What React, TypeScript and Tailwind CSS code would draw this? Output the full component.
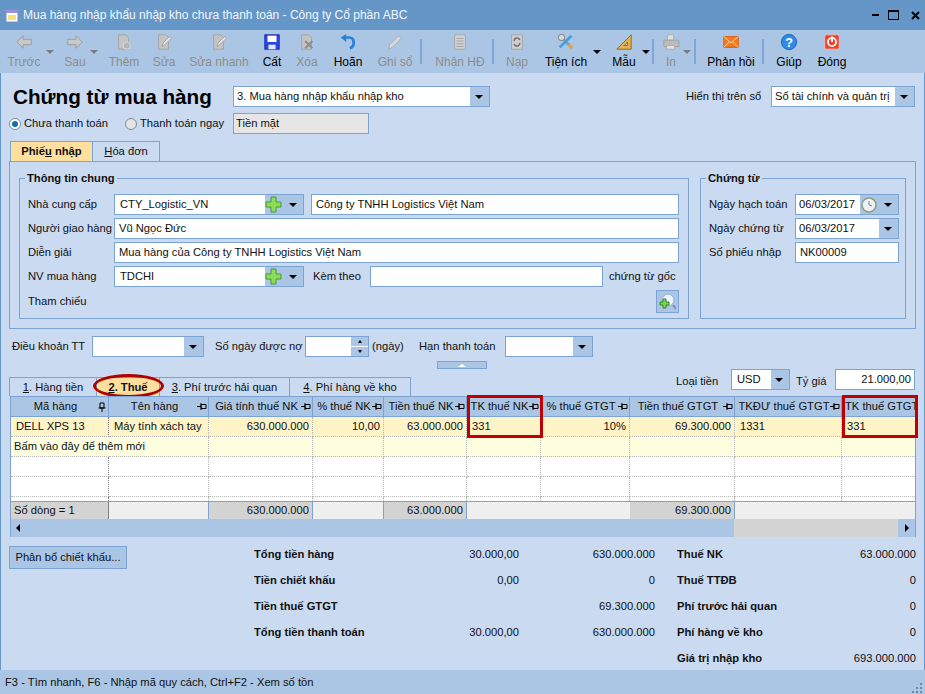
import React from 'react';

// Tam giác nhỏ của combo và toolbar
const Caret: React.FC<{ gray?: boolean }> = ({ gray }) => (
  <span className={`block h-0 w-0 border-x-[4px] border-t-[4px] border-x-transparent ${gray ? 'border-t-[#7d7d7d]' : 'border-t-black'}`} />
);

const Svg: React.FC<{ children: React.ReactNode }> = ({ children }) => (
  <svg width="18" height="18" viewBox="0 0 20 20" className="block">{children}</svg>
);

const DocBase = () => <path d="M4 2h8l3 3v13H4z" fill="#c4c4c4" stroke="#a3a3a3" />;

const icons: Record<string, React.ReactNode> = {
  back: <Svg><path d="M9 3 2 10l7 7v-4h9V7H9z" fill="#c9c9c9" stroke="#9a9a9a" /></Svg>,
  next: <Svg><path d="M11 3l7 7-7 7v-4H2V7h9z" fill="#c9c9c9" stroke="#9a9a9a" /></Svg>,
  add: <Svg><DocBase /><circle cx="13" cy="14" r="4" fill="#b5b5b5" stroke="#dcdcdc" /></Svg>,
  edit: <Svg><DocBase /><path d="M8 15l1-4 7-7 2 2-7 7z" fill="#e2e2e2" stroke="#a3a3a3" /></Svg>,
  save: (
    <Svg>
      <rect x="2" y="2" width="16" height="16" fill="#2b46e0" stroke="#1a2bb0" />
      <rect x="5" y="3" width="10" height="7" fill="#fff" />
      <rect x="6" y="13" width="8" height="5" fill="#dfe6ff" />
    </Svg>
  ),
  del: <Svg><DocBase /><path d="M8 9l8 8M16 9l-8 8" stroke="#8f8f8f" strokeWidth="2.4" /></Svg>,
  undo: (
    <Svg>
      <path d="M6 5h5c7 0 7 10 1 12" fill="none" stroke="#2a7fd6" strokeWidth="3" />
      <path d="M8 1 2 5l6 5z" fill="#2a7fd6" />
    </Svg>
  ),
  pencil: <Svg><path d="M3 18l1-5L14 3l3 3L7 16z" fill="#d8d8d8" stroke="#a8a8a8" /></Svg>,
  invoice: (
    <Svg>
      <path d="M4 2h12v16H4z" fill="#d4d4d4" stroke="#a3a3a3" />
      <path d="M6 6h8M6 9h8M6 12h8M6 15h8" stroke="#9a9a9a" />
    </Svg>
  ),
  reload: (
    <Svg>
      <path d="M4 2h12v16H4z" fill="#cfcfcf" stroke="#a3a3a3" />
      <path d="M7 9a3 3 0 0 1 6-1M13 11a3 3 0 0 1-6 1" fill="none" stroke="#6e6e6e" strokeWidth="1.6" />
    </Svg>
  ),
  tools: (
    <Svg>
      <path d="M4 4l13 13" stroke="#8a9db0" strokeWidth="3" />
      <path d="M16 3 3 16" stroke="#3ea0e6" strokeWidth="3" />
      <circle cx="5" cy="5" r="3.5" fill="#d8d8d8" stroke="#777" />
      <path d="M13 13l4 4" stroke="#e8a33a" strokeWidth="3" />
    </Svg>
  ),
  ruler: (
    <Svg>
      <path d="M18 2v16H2z" fill="#e8b04a" stroke="#8a6a20" />
      <path d="M14 10v4h-4z" fill="#c9daf1" stroke="#8a6a20" />
    </Svg>
  ),
  print: (
    <Svg>
      <path d="M6 2h7v6H6z" fill="#dedede" stroke="#aaa" />
      <path d="M2 8h15a2 2 0 0 1 2 2v5H2z" fill="#bcbcbc" stroke="#a0a0a0" />
      <path d="M5 14h9v4H5z" fill="#e4e4e4" stroke="#aaa" />
    </Svg>
  ),
  mail: (
    <Svg>
      <rect x="2" y="4" width="16" height="12" fill="#f47a20" stroke="#d85f10" />
      <path d="M2 4l8 7 8-7M2 16l6-6M18 16l-6-6" fill="none" stroke="#ffe0c0" />
    </Svg>
  ),
  help: (
    <Svg>
      <circle cx="10" cy="10" r="8.5" fill="#2f8be6" stroke="#1c64b8" />
      <text x="10" y="15" textAnchor="middle" fontSize="14" fontWeight="700" fill="#fff" fontFamily="Liberation Sans, sans-serif">?</text>
    </Svg>
  ),
  close: (
    <Svg>
      <rect x="2" y="2" width="16" height="16" rx="2" fill="#e8442e" stroke="#f6c0b4" />
      <circle cx="10" cy="10" r="4.5" fill="none" stroke="#fff" strokeWidth="2" />
      <path d="M10 4v6" stroke="#fff" strokeWidth="2" />
    </Svg>
  ),
};

const toolbar = [
  { label: 'Trước', icon: 'back', box: 'ml-[4px] w-[40px]', off: true, caret: 'ml-[2px]' },
  { label: 'Sau', icon: 'next', box: 'ml-[6px] w-[30px]', off: true, caret: 'ml-0' },
  { label: 'Thêm', icon: 'add', box: 'ml-[6px] w-[40px]', off: true },
  { label: 'Sửa', icon: 'edit', box: 'ml-[5px] w-[30px]', off: true },
  { label: 'Sửa nhanh', icon: 'edit', box: 'ml-[10px] w-[60px]', off: true },
  { label: 'Cất', icon: 'save', box: 'ml-[8px] w-[30px]' },
  { label: 'Xóa', icon: 'del', box: 'ml-[5px] w-[30px]', off: true },
  { label: 'Hoãn', icon: 'undo', box: 'ml-[6px] w-[40px]' },
  { label: 'Ghi sổ', icon: 'pencil', box: 'ml-[7px] w-[40px]', off: true, sep: 'ml-[5px]' },
  { label: 'Nhận HĐ', icon: 'invoice', box: 'ml-[8px] w-[60px]', off: true, sep: 'ml-[2px]' },
  { label: 'Nạp', icon: 'reload', box: 'ml-[8px] w-[30px]', off: true },
  { label: 'Tiện ích', icon: 'tools', box: 'ml-[9px] w-[50px]', caret: 'ml-[2px]' },
  { label: 'Mẫu', icon: 'ruler', box: 'ml-[8px] w-[30px]', caret: 'ml-[3px]', sep: 'ml-[2px]' },
  { label: 'In', icon: 'print', box: 'ml-[7px] w-[20px]', off: true, caret: 'ml-[2px]', sep: 'ml-[3px]' },
  { label: 'Phản hồi', icon: 'mail', box: 'ml-[5px] w-[60px]', sep: 'ml-[1px]' },
  { label: 'Giúp', icon: 'help', box: 'ml-[10px] w-[30px]' },
  { label: 'Đóng', icon: 'close', box: 'ml-[13px] w-[30px]' },
];

const Toolbar = () => (
  <div className="flex h-[43px] items-start bg-[#abc6e4]">
    {toolbar.map((t) => (
      <React.Fragment key={t.label}>
        <div className={`flex shrink-0 flex-col items-center pt-[3px] ${t.box}`}>
          {icons[t.icon]}
          <span className={`mt-[4px] text-[12px] whitespace-nowrap leading-[15px] ${t.off ? 'text-[#8d8d8d]' : 'text-black'}`}>{t.label}</span>
        </div>
        {t.caret && (
          <div className={`w-[8px] shrink-0 pt-[20px] ${t.caret}`}>
            <Caret gray={t.off} />
          </div>
        )}
        {t.sep && <div className={`mt-[9px] h-[25px] w-[2px] shrink-0 bg-[#7ea6d8] ${t.sep}`} />}
      </React.Fragment>
    ))}
  </div>
);

const Input: React.FC<{ className?: string; children?: React.ReactNode }> = ({ className, children }) => (
  <div className={`flex h-[21px] shrink-0 items-center border border-[#7ba3d4] bg-white whitespace-nowrap ${className ?? 'px-[4px]'}`}>{children}</div>
);

const Plus = () => (
  <svg width="17" height="17" viewBox="0 0 17 17" className="block">
    <path d="M6 1h5v5h5v5h-5v5H6v-5H1V6h5z" fill="#8fdc5a" stroke="#3f9e2c" />
  </svg>
);

const Clock = () => (
  <svg width="16" height="16" viewBox="0 0 16 16" className="block">
    <circle cx="8" cy="8" r="7" fill="#eef2f2" stroke="#8f9a86" strokeWidth="1.5" />
    <path d="M8 4v4l3 1" fill="none" stroke="#6a8aa8" />
  </svg>
);

// Combo: ô trắng + phần nút xanh bên phải
const Combo: React.FC<{ className?: string; btn: string; text?: string; extra?: React.ReactNode; pad?: string }> = ({ className, btn, text, extra, pad }) => (
  <div className={`flex h-[21px] shrink-0 border border-[#7ba3d4] bg-white ${className ?? ''}`}>
    <div className={`flex flex-1 items-center overflow-hidden whitespace-nowrap ${pad ?? 'px-[3px]'}`}>{text}</div>
    <div className={`flex shrink-0 items-center justify-end gap-[7px] bg-[#abc6e4] pr-[6px] ${btn}`}>
      {extra}
      <Caret />
    </div>
  </div>
);

const Label: React.FC<{ className?: string; children: React.ReactNode }> = ({ className, children }) => (
  <span className={`shrink-0 whitespace-nowrap ${className ?? ''}`}>{children}</span>
);

const Group: React.FC<{ title: string; className: string; children: React.ReactNode }> = ({ title, className, children }) => (
  <div className={`relative h-[141px] shrink-0 border border-[#7ba3d4] pt-[15px] ${className}`}>
    <span className="absolute top-[-9px] left-[5px] bg-[#c9daf1] px-[2px] leading-[16px] font-bold">{title}</span>
    {children}
  </div>
);

const Radio: React.FC<{ on?: boolean }> = ({ on }) => (
  <span className={`flex h-[12px] w-[12px] shrink-0 items-center justify-center rounded-full border border-[#7f8a96] ${on ? 'bg-white' : 'bg-[#e4e4e4]'}`}>
    {on && <span className="h-[6px] w-[6px] rounded-full bg-[#0f6fa8]" />}
  </span>
);

const Pin: React.FC<{ down?: boolean }> = ({ down }) => (
  <svg width="10" height="10" viewBox="0 0 10 10" className="block shrink-0">
    {down ? (
      <path d="M3 1h4v5H3zM1.5 6h7M5 6v4" fill="none" stroke="#000" />
    ) : (
      <path d="M4 2.5h5v4H4zM4 1v7M0 4.5h4" fill="none" stroke="#000" />
    )}
  </svg>
);

const cols = 'grid grid-cols-[98px_100px_104px_71px_83px_74px_89px_105px_107px_73px]';

const headers = ['Mã hàng', 'Tên hàng', 'Giá tính thuế NK', '% thuế NK', 'Tiền thuế NK', 'TK thuế NK', '% thuế GTGT', 'Tiền thuế GTGT', 'TKĐƯ thuế GTGT', 'TK thuế GTGT'];
const row1: { t: string; right?: boolean }[] = [
  { t: 'DELL XPS 13' }, { t: 'Máy tính xách tay' }, { t: '630.000.000', right: true }, { t: '10,00', right: true },
  { t: '63.000.000', right: true }, { t: '331' }, { t: '10%', right: true }, { t: '69.300.000', right: true }, { t: '1331' }, { t: '331' },
];
const totals = ['Số dòng = 1', '', '630.000.000', '', '63.000.000', '', '', '69.300.000', '', ''];
const graySum = [true, false, true, false, true, false, false, true, false, false];

const Grid = () => (
  <div className="relative ml-[9px] h-[141px] w-[906px] shrink-0 border border-[#7ba3d4] bg-white">
    {/* Tiêu đề cột */}
    <div className={`${cols} h-[20px] bg-[#abc6e4]`}>
      {headers.map((h, i) => (
        <div key={h} className="flex items-center overflow-hidden border-r border-b border-r-[#7ba3d4] border-b-[#7ba3d4] pr-[1px] pl-[3px] whitespace-nowrap last:border-r-0">
          <span className={`${i === 9 ? '' : 'flex-1 text-center'}`}>{h}</span>
          {i < 9 && <Pin down={i === 0} />}
        </div>
      ))}
    </div>
    <div className={`${cols} h-[20px] bg-[#fff3c8]`}>
      {row1.map((c, i) => (
        <div key={i} className={`flex items-center border-r border-b border-dotted border-[#b5b5b5] pr-[3px] pl-[5px] whitespace-nowrap last:border-r-0 ${c.right ? 'justify-end' : ''} ${i === 0 ? 'border-r-solid border-r-[#808080]' : ''}`}>
          {c.t}
        </div>
      ))}
    </div>
    <div className={`${cols} h-[20px] bg-[#ffffdf]`}>
      {headers.map((h, i) => (
        <div key={h} className={`flex items-center border-r border-b border-dotted border-[#b5b5b5] pl-[3px] whitespace-nowrap last:border-r-0 ${i === 0 ? 'border-r-transparent' : ''}`}>
          {i === 0 ? <span className="relative z-10">Bấm vào đây để thêm mới</span> : null}
        </div>
      ))}
    </div>
    {[0, 1].map((r) => (
      <div key={r} className={`${cols} h-[20px]`}>
        {headers.map((h, i) => (
          <div key={h} className={`border-r border-b border-dotted border-[#b5b5b5] last:border-r-0 ${i === 0 ? 'border-r-solid border-r-[#808080]' : ''}`} />
        ))}
      </div>
    ))}
    <div className={`${cols} h-[4px]`}>
      {headers.map((h, i) => (
        <div key={h} className={`border-r border-dotted border-[#b5b5b5] last:border-r-0 ${i === 0 ? 'border-r-solid border-r-[#808080]' : ''}`} />
      ))}
    </div>
    {/* Dòng tổng */}
    <div className={`${cols} h-[18px] border-y border-[#7ba3d4]`}>
      {totals.map((t, i) => (
        <div key={i} className={`flex items-center pr-[3px] pl-[3px] whitespace-nowrap ${i < 5 || i === 7 ? 'border-r border-r-[#7ba3d4]' : ''} ${i === 0 ? 'border-r-[#808080]' : ''} ${graySum[i] ? 'bg-[#d3d3d3]' : 'bg-[#efefef]'} ${i === 0 ? '' : 'justify-end'}`}>
          {t}
        </div>
      ))}
    </div>
    {/* Thanh cuộn ngang */}
    <div className="flex h-[18px] items-center bg-[#abc6e4]">
      <span className="ml-[5px] h-0 w-0 border-y-[4px] border-r-[4px] border-y-transparent border-r-black" />
      <div className="flex-1" />
      <div className="h-full w-[164px] bg-[#d3d3d3]" />
      <div className="flex w-[17px] justify-center">
        <span className="h-0 w-0 border-y-[4px] border-l-[4px] border-y-transparent border-l-black" />
      </div>
    </div>
    {/* Khung đỏ đánh dấu */}
    <div className="absolute top-[-2px] left-[456px] h-[43px] w-[76px] border-[3px] border-[#c00000]" />
    <div className="absolute top-[-2px] left-[831px] h-[43px] w-[76px] border-[3px] border-[#c00000]" />
  </div>
);

const Sum: React.FC<{ children?: React.ReactNode; bold?: boolean; right?: boolean }> = ({ children, bold, right }) => (
  <div className={`flex items-center whitespace-nowrap ${bold ? 'font-bold' : ''} ${right ? 'justify-end' : ''}`}>{children}</div>
);

const summary = [
  ['Tổng tiền hàng', '30.000,00', '630.000.000', 'Thuế NK', '63.000.000'],
  ['Tiền chiết khấu', '0,00', '0', 'Thuế TTĐB', '0'],
  ['Tiền thuế GTGT', '', '69.300.000', 'Phí trước hải quan', '0'],
  ['Tổng tiền thanh toán', '30.000,00', '630.000.000', 'Phí hàng về kho', '0'],
  ['', '', '', 'Giá trị nhập kho', '693.000.000'],
];

export default function App() {
  return (
    <div className="flex h-[694px] w-[925px] flex-col overflow-hidden bg-[#c9daf1] font-['Liberation_Sans',sans-serif] text-[11.2px] text-[#111]">
      {/* Thanh tiêu đề */}
      <div className="flex h-[30px] shrink-0 items-center bg-[#6496c8] text-[#f2f6fb]">
        <svg width="16" height="16" viewBox="0 0 16 16" className="ml-[4px] block">
          <path d="M2 3h12v12H2z" fill="#fff" stroke="#7c8fb8" />
          <path d="M2 3h12v3H2z" fill="#9a8fd8" />
          <path d="M4 8h8v5H4z" fill="#f6e27a" />
        </svg>
        <span className="ml-[3px] text-[12px]">Mua hàng nhập khẩu nhập kho chưa thanh toán - Công ty Cổ phần ABC</span>
        <div className="ml-auto flex items-center pr-[5px]">
          <span className="h-[2px] w-[7px] bg-black" />
          <span className="ml-[9px] h-[10px] w-[11px] border border-t-2 border-black" />
          <svg width="9" height="9" viewBox="0 0 9 9" className="ml-[12px] block">
            <path d="M1 1l7 7M8 1 1 8" stroke="#000" strokeWidth="2" />
          </svg>
        </div>
      </div>

      <Toolbar />

      <div className="flex min-h-0 flex-1 flex-col border-x border-[#6496c8]">
        {/* Tiêu đề chứng từ */}
        <div className="mt-[13px] flex h-[21px] shrink-0 items-center">
          <h1 className="ml-[12px] w-[220px] shrink-0 text-[20.7px] leading-[21px] font-bold whitespace-nowrap text-black">Chứng từ mua hàng</h1>
          <Combo className="w-[257px]" btn="w-[19px]" text="3. Mua hàng nhập khẩu nhập kho" />
          <Label className="ml-[196px] w-[85px]">Hiển thị trên sổ</Label>
          <Combo className="w-[144px]" btn="w-[19px]" text="Sổ tài chính và quản trị" />
        </div>
        <div className="mt-[6px] flex h-[21px] shrink-0 items-center">
          <span className="ml-[8px]"><Radio on /></span>
          <Label className="ml-[3px] w-[82px]">Chưa thanh toán</Label>
          <span className="ml-[19px]"><Radio /></span>
          <Label className="ml-[3px] w-[82px]">Thanh toán ngay</Label>
          <Input className="ml-[11px] w-[136px] bg-[#e6e6e6]! px-[2px]">Tiền mặt</Input>
        </div>

        {/* Tab trên */}
        <div className="mt-[7px] ml-[9px] flex h-[20px] shrink-0">
          <div className="flex w-[83px] items-center justify-center border border-b-0 border-[#7ba3d4] bg-[#ffdf9e] font-bold">
            <span>Phiế<u>u</u> nhập</span>
          </div>
          <div className="flex w-[67px] items-center justify-center border border-b-0 border-l-0 border-[#7ba3d4]">
            <span><u>H</u>óa đơn</span>
          </div>
        </div>
        <div className="ml-[8px] flex h-[168px] w-[907px] shrink-0 items-start border border-[#7ba3d4] pt-[16px]">
          <Group title="Thông tin chung" className="ml-[9px] w-[670px]">
            <div className="flex flex-col gap-[3px]">
              <div className="flex items-center">
                <Label className="w-[94px] pl-[8px]">Nhà cung cấp</Label>
                <Combo className="w-[190px]" btn="w-[38px]" text="CTY_Logistic_VN" extra={<Plus />} pad="px-[5px]" />
                <Input className="ml-[7px] w-[368px] px-[4px]">Công ty TNHH Logistics Việt Nam</Input>
              </div>
              <div className="flex items-center">
                <Label className="w-[94px] pl-[8px]">Người giao hàng</Label>
                <Input className="w-[565px] px-[4px]">Vũ Ngọc Đức</Input>
              </div>
              <div className="flex items-center">
                <Label className="w-[94px] pl-[8px]">Diễn giải</Label>
                <Input className="w-[565px] px-[4px]">Mua hàng của Công ty TNHH Logistics Việt Nam</Input>
              </div>
              <div className="flex items-center">
                <Label className="w-[94px] pl-[8px]">NV mua hàng</Label>
                <Combo className="w-[190px]" btn="w-[38px]" text="TDCHI" extra={<Plus />} pad="px-[5px]" />
                <Label className="ml-[9px] w-[57px]">Kèm theo</Label>
                <Input className="w-[233px]" />
                <Label className="ml-[6px]">chứng từ gốc</Label>
              </div>
              <div className="flex h-[23px] items-center">
                <Label className="flex-1 pl-[8px]">Tham chiếu</Label>
                <div className="mr-[9px] flex h-[23px] w-[23px] items-center justify-center border border-[#7ba3d4] bg-[#abc6e4]">
                  <svg width="17" height="17" viewBox="0 0 17 17" className="block">
                    <circle cx="9" cy="7" r="6" fill="#e8f3fb" stroke="#8fb0cc" />
                    <path d="M14 12l3 4" stroke="#8a82c8" strokeWidth="2" />
                    <path d="M4 6h3v3h3v3H7v3H4v-3H1V9h3z" fill="#7fd14f" stroke="#2f8a28" />
                  </svg>
                </div>
              </div>
            </div>
          </Group>
          <Group title="Chứng từ" className="ml-[11px] w-[206px]">
            <div className="flex flex-col gap-[3px]">
              <div className="flex items-center">
                <Label className="w-[94px] pl-[8px]">Ngày hạch toán</Label>
                <Combo className="w-[104px]" btn="w-[38px]" text="06/03/2017" extra={<Clock />} />
              </div>
              <div className="flex items-center">
                <Label className="w-[94px] pl-[8px]">Ngày chứng từ</Label>
                <Combo className="w-[104px]" btn="w-[19px]" text="06/03/2017" />
              </div>
              <div className="flex items-center">
                <Label className="w-[94px] pl-[8px]">Số phiếu nhập</Label>
                <Input className="w-[104px] px-[4px]">NK00009</Input>
              </div>
            </div>
          </Group>
        </div>

        {/* Điều khoản thanh toán */}
        <div className="mt-[7px] flex h-[21px] shrink-0 items-center">
          <Label className="ml-[11px] w-[80px]">Điều khoản TT</Label>
          <Combo className="w-[112px]" btn="w-[19px]" />
          <Label className="ml-[11px] w-[90px]">Số ngày được nợ</Label>
          <div className="flex h-[21px] w-[64px] shrink-0 border border-[#7ba3d4] bg-white">
            <div className="flex-1" />
            <div className="flex w-[17px] flex-col gap-[1px] bg-white">
              <div className="flex flex-1 items-center justify-center bg-[#abc6e4]">
                <span className="h-0 w-0 border-x-[2px] border-b-[3px] border-x-transparent border-b-black" />
              </div>
              <div className="flex flex-1 items-center justify-center bg-[#abc6e4]">
                <span className="h-0 w-0 border-x-[2px] border-t-[3px] border-x-transparent border-t-black" />
              </div>
            </div>
          </div>
          <Label className="ml-[3px] w-[47px]">(ngày)</Label>
          <Label className="w-[86px]">Hạn thanh toán</Label>
          <Combo className="w-[88px]" btn="w-[19px]" />
        </div>

        {/* Nút thu gọn */}
        <div className="mt-[4px] ml-[436px] flex h-[8px] w-[50px] shrink-0 items-center justify-center border border-[#7ba3d4] bg-[#abc6e4]">
          <span className="h-0 w-0 border-x-[4px] border-b-[3px] border-x-transparent border-b-white" />
        </div>

        {/* Tab dưới và loại tiền */}
        <div className="flex h-[27px] shrink-0">
          <div className="relative mt-[8px] ml-[8px] flex h-[19px]">
            <div className="flex w-[88px] items-center justify-center border border-b-0 border-[#7ba3d4]">
              <span><u>1</u>. Hàng tiền</span>
            </div>
            <div className="flex w-[62px] items-center justify-center border-t border-[#7ba3d4] bg-[#ffdf9e] font-bold">
              <span><u>2</u>. Thuế</span>
            </div>
            <div className="flex w-[131px] items-center justify-center border border-b-0 border-[#7ba3d4]">
              <span><u>3</u>. Phí trước hải quan</span>
            </div>
            <div className="flex w-[121px] items-center justify-center border border-b-0 border-l-0 border-[#7ba3d4]">
              <span><u>4</u>. Phí hàng về kho</span>
            </div>
            <div className="absolute top-[-3px] left-[84px] h-[24px] w-[71px] rounded-[50%] border-[3px] border-[#b00000]" />
          </div>
          <Label className="mt-[3px] ml-[265px] w-[55px] leading-[18px]">Loại tiền</Label>
          <Combo className="w-[59px]" btn="w-[18px]" text="USD" pad="px-[5px]" />
          <Label className="ml-[6px] w-[39px] pt-[3px] leading-[18px]">Tỷ giá</Label>
          <Input className="w-[80px] justify-end pr-[3px]">21.000,00</Input>
        </div>

        <Grid />

        {/* Phần tổng cộng */}
        <div className="flex min-h-0 flex-1 pt-[4px]">
          <div className="mt-[5px] ml-[8px] flex h-[23px] w-[118px] shrink-0 items-center justify-center border border-[#7ba3d4] bg-[#abc6e4]">
            Phân bổ chiết khấu...
          </div>
          <div className="ml-[127px] grid grid-cols-[110px_155px_136px_22px_239px] grid-rows-[26px_26px_26px_26px_26px]">
            {summary.map((r) => (
              <React.Fragment key={r[3]}>
                <Sum bold>{r[0]}</Sum>
                <Sum right>{r[1]}</Sum>
                <Sum right>{r[2]}</Sum>
                <div />
                <div className="flex items-center justify-between whitespace-nowrap">
                  <span className="font-bold">{r[3]}</span>
                  <span>{r[4]}</span>
                </div>
              </React.Fragment>
            ))}
          </div>
        </div>
      </div>

      {/* Thanh trạng thái */}
      <div className="flex h-[24px] shrink-0 items-center justify-between bg-[#abc6e4] pr-[2px] pl-[5px]">
        <span>F3 - Tìm nhanh, F6 - Nhập mã quy cách, Ctrl+F2 - Xem số tồn</span>
        <svg width="11" height="11" viewBox="0 0 11 11" className="mt-[10px] block">
          <path d="M8 1h2v2H8zM4 5h2v2H4zM8 5h2v2H8zM0 9h2v2H0zM4 9h2v2H4zM8 9h2v2H8z" fill="#6a86a8" />
        </svg>
      </div>
    </div>
  );
}
